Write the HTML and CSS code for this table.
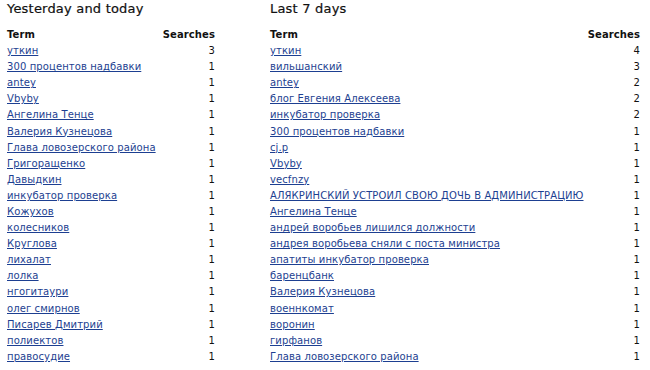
FILE: index.html
```html
<!DOCTYPE html>
<html>
<head>
<meta charset="utf-8">
<link rel="stylesheet" href="styles.css">
</head>
<body>
<div class="page">
  <section class="block block-left">
    <h2 class="title">Yesterday and today</h2>
    <table class="stats">
      <thead><tr><th class="term">Term</th><th class="num">Searches</th></tr></thead>
      <tbody>
        <tr><td><a href="#">уткин</a></td><td class="num">3</td></tr>
        <tr><td><a href="#">300 процентов надбавки</a></td><td class="num">1</td></tr>
        <tr><td><a href="#">antey</a></td><td class="num">1</td></tr>
        <tr><td><a href="#">Vbyby</a></td><td class="num">1</td></tr>
        <tr><td><a href="#">Ангелина Тенце</a></td><td class="num">1</td></tr>
        <tr><td><a href="#">Валерия Кузнецова</a></td><td class="num">1</td></tr>
        <tr><td><a href="#">Глава ловозерского района</a></td><td class="num">1</td></tr>
        <tr><td><a href="#">Григоращенко</a></td><td class="num">1</td></tr>
        <tr><td><a href="#">Давыдкин</a></td><td class="num">1</td></tr>
        <tr><td><a href="#">инкубатор проверка</a></td><td class="num">1</td></tr>
        <tr><td><a href="#">Кожухов</a></td><td class="num">1</td></tr>
        <tr><td><a href="#">колесников</a></td><td class="num">1</td></tr>
        <tr><td><a href="#">Круглова</a></td><td class="num">1</td></tr>
        <tr><td><a href="#">лихалат</a></td><td class="num">1</td></tr>
        <tr><td><a href="#">лолка</a></td><td class="num">1</td></tr>
        <tr><td><a href="#">нгогитаури</a></td><td class="num">1</td></tr>
        <tr><td><a href="#">олег смирнов</a></td><td class="num">1</td></tr>
        <tr><td><a href="#">Писарев Дмитрий</a></td><td class="num">1</td></tr>
        <tr><td><a href="#">полиектов</a></td><td class="num">1</td></tr>
        <tr><td><a href="#">правосудие</a></td><td class="num">1</td></tr>
      </tbody>
    </table>
  </section>
  <section class="block block-right">
    <h2 class="title">Last 7 days</h2>
    <table class="stats">
      <thead><tr><th class="term">Term</th><th class="num">Searches</th></tr></thead>
      <tbody>
        <tr><td><a href="#">уткин</a></td><td class="num">4</td></tr>
        <tr><td><a href="#">вильшанский</a></td><td class="num">3</td></tr>
        <tr><td><a href="#">antey</a></td><td class="num">2</td></tr>
        <tr><td><a href="#">блог Евгения Алексеева</a></td><td class="num">2</td></tr>
        <tr><td><a href="#">инкубатор проверка</a></td><td class="num">2</td></tr>
        <tr><td><a href="#">300 процентов надбавки</a></td><td class="num">1</td></tr>
        <tr><td><a href="#">cj.p</a></td><td class="num">1</td></tr>
        <tr><td><a href="#">Vbyby</a></td><td class="num">1</td></tr>
        <tr><td><a href="#">vecfnzy</a></td><td class="num">1</td></tr>
        <tr><td><a href="#">АЛЯКРИНСКИЙ УСТРОИЛ СВОЮ ДОЧЬ В АДМИНИСТРАЦИЮ</a></td><td class="num">1</td></tr>
        <tr><td><a href="#">Ангелина Тенце</a></td><td class="num">1</td></tr>
        <tr><td><a href="#">андрей воробьев лишился должности</a></td><td class="num">1</td></tr>
        <tr><td><a href="#">андрея воробьева сняли с поста министра</a></td><td class="num">1</td></tr>
        <tr><td><a href="#">апатиты инкубатор проверка</a></td><td class="num">1</td></tr>
        <tr><td><a href="#">баренцбанк</a></td><td class="num">1</td></tr>
        <tr><td><a href="#">Валерия Кузнецова</a></td><td class="num">1</td></tr>
        <tr><td><a href="#">военнкомат</a></td><td class="num">1</td></tr>
        <tr><td><a href="#">воронин</a></td><td class="num">1</td></tr>
        <tr><td><a href="#">гирфанов</a></td><td class="num">1</td></tr>
        <tr><td><a href="#">Глава ловозерского района</a></td><td class="num">1</td></tr>
      </tbody>
    </table>
  </section>
</div>
</body>
</html>
```
FILE: styles.css
```css
html, body {
  margin: 0;
  padding: 0;
  background: #fff;
}
body {
  font-family: "DejaVu Sans", Verdana, sans-serif;
  font-size: 10px;
  letter-spacing: 0.1px;
  color: #111;
}
.page {
  display: flex;
  padding: 0 0 0 7px;
  gap: 55px;
}
.block-left { width: 208px; flex: none; }
.block-right { width: 370px; flex: none; }
.title {
  margin: 0;
  padding-top: 1px;
  font-size: 13px;
  font-weight: normal;
  letter-spacing: 0.2px;
  line-height: 16px;
  color: #111;
  -webkit-text-stroke: 0.2px #111;
}
.stats {
  width: 100%;
  border-collapse: collapse;
  margin-top: 10px;
}
.stats th, .stats td {
  padding: 0;
  height: 16px;
  line-height: 16px;
  white-space: nowrap;
}
.stats tbody td {
  height: 16.1px;
}
.stats th {
  font-weight: bold;
  text-align: left;
  color: #111;
}
.stats .num { text-align: right; }
.stats a {
  color: #1d3f91;
  text-decoration: underline;
}
```
